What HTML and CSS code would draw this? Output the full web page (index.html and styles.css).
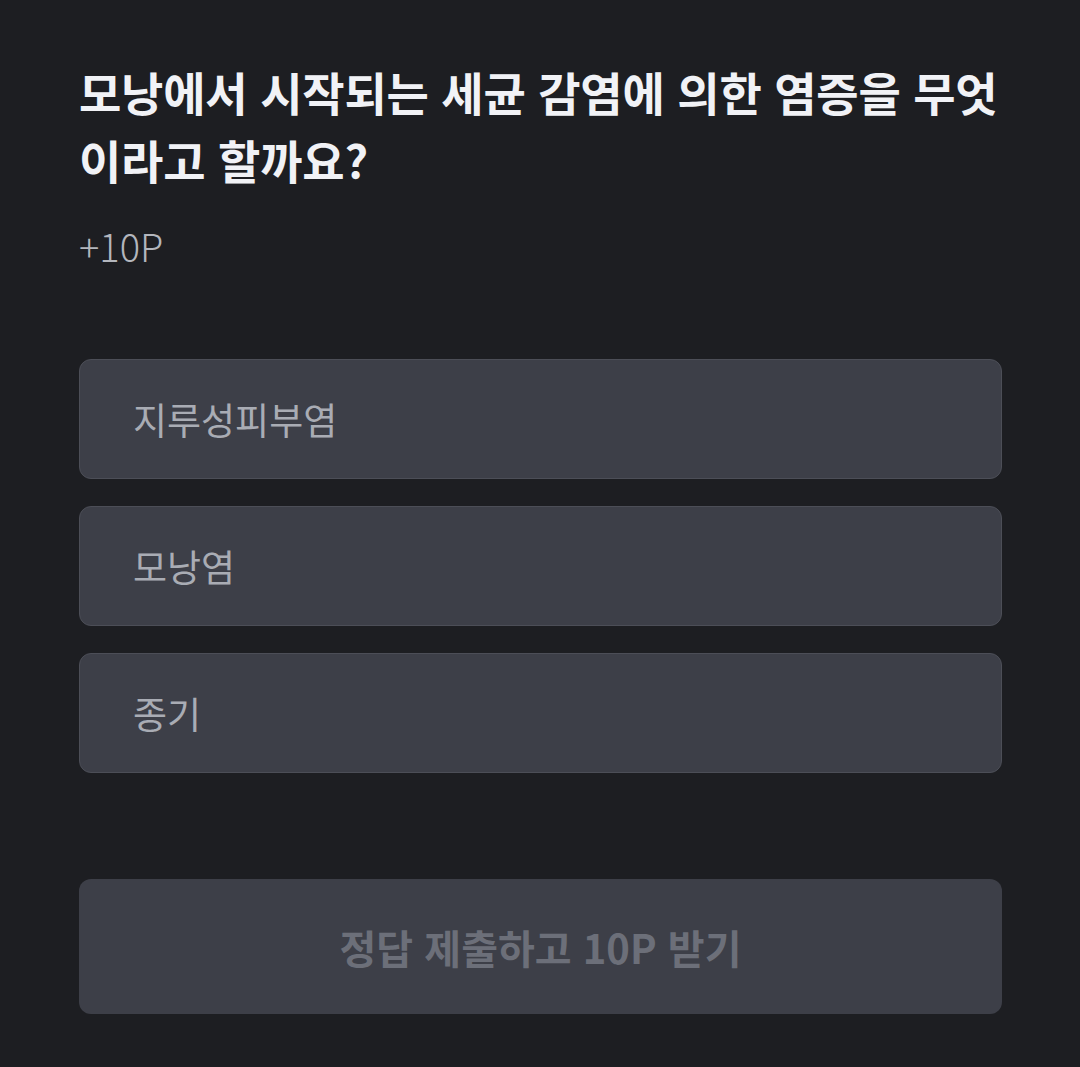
FILE: index.html
```html
<!DOCTYPE html>
<html lang="ko">
<head>
    <meta charset="UTF-8">
    <meta name="viewport" content="width=device-width, initial-scale=1.0">
    <title>Quiz</title>
    <link rel="stylesheet" href="styles.css">
</head>
<body>
    <div class="quiz">
        <h1 class="question">모낭에서 시작되는 세균 감염에 의한 염증을 무엇이라고 할까요?</h1>
        <p class="reward">+10P</p>

        <div class="options">
            <button class="option">지루성피부염</button>
            <button class="option">모낭염</button>
            <button class="option">종기</button>
        </div>

        <button class="submit" disabled>정답 제출하고 10P 받기</button>
    </div>
</body>
</html>
```

FILE: styles.css
```css
* {
    box-sizing: border-box;
}
body {
    margin: 0;
    background-color: #1d1e22;
    font-family: "Noto Sans CJK KR", "Noto Sans", sans-serif;
}
.quiz {
    padding: 57px 78px 0 79px;
}
.question {
    margin: 0;
    font-size: 46px;
    line-height: 68px;
    font-weight: 700;
    letter-spacing: -0.2px;
    color: #f1f2f6;
}
.reward {
    margin: 28px 0 0;
    font-size: 38px;
    line-height: 50px;
    font-weight: 300;
    color: #b3b6bd;
}
.options {
    display: flex;
    flex-direction: column;
    gap: 27px;
    margin-top: 88px;
}
.option {
    height: 120px;
    padding: 0 0 0 53px;
    text-align: left;
    background-color: #3d3f48;
    border: 1px solid #4c4e57;
    border-radius: 12px;
    font-family: inherit;
    font-size: 37px;
    color: #a9acb4;
}
.submit {
    display: block;
    width: 100%;
    height: 135px;
    margin-top: 106px;
    background-color: #3d3f48;
    border: none;
    border-radius: 12px;
    font-family: inherit;
    font-size: 40px;
    font-weight: 700;
    color: #6c6f79;
}
```
